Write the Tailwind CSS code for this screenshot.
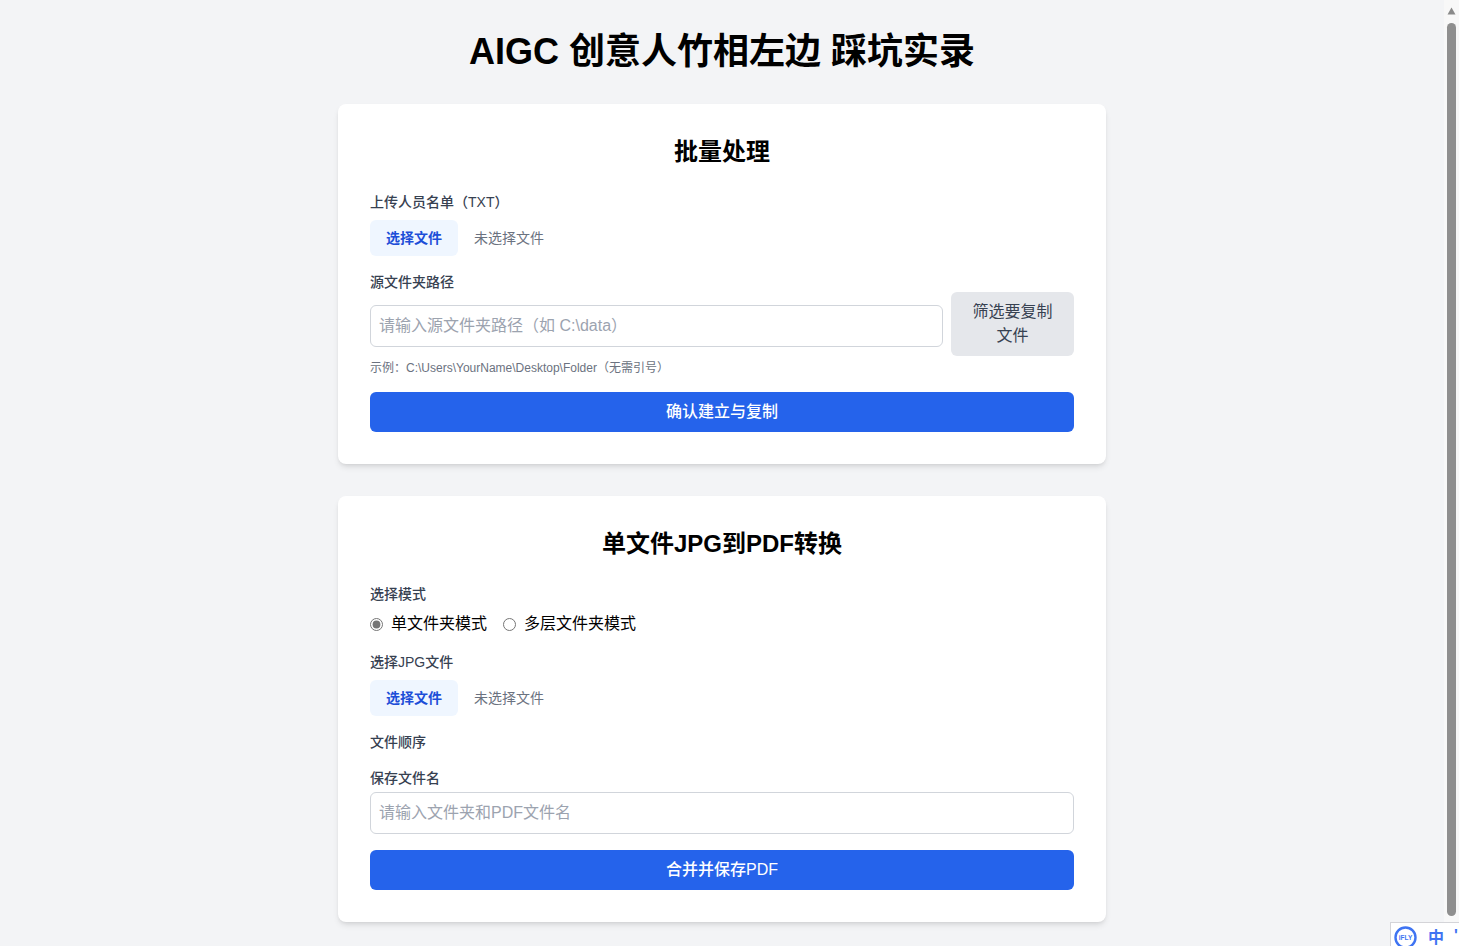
<!DOCTYPE html>
<html lang="zh-CN">
<head>
<meta charset="utf-8">
<title>AIGC</title>
<script src="https://cdn.jsdelivr.net/npm/@tailwindcss/browser@4"></script>
</head>
<body class="m-0 bg-[#f3f4f6] font-['Liberation_Sans','Noto_Sans_CJK_SC',sans-serif]">
<div class="relative flex h-[946px] w-[1459px] overflow-hidden">
  <main class="w-[1444px] shrink-0 py-8">
    <h1 class="mb-8 text-center text-4xl font-bold text-black">AIGC 创意人竹相左边 踩坑实录</h1>

    <section class="mx-auto mb-8 w-[768px] rounded-lg bg-white p-8 shadow-md">
      <h2 class="mb-6 text-center text-2xl font-bold text-black">批量处理</h2>
      <div class="mb-4">
        <div class="mb-2 text-sm font-medium text-[#374151]">上传人员名单（TXT）</div>
        <div class="flex items-center text-sm">
          <button class="mr-4 rounded-md bg-[#eff6ff] px-4 py-2 font-semibold text-[#1d4ed8]">选择文件</button>
          <span class="text-[#6b7280]">未选择文件</span>
        </div>
      </div>
      <div class="mb-4">
        <div class="text-sm font-medium text-[#374151]">源文件夹路径</div>
        <div class="flex items-center gap-2">
          <input class="mt-1 h-[42px] min-w-0 flex-1 rounded-md border border-[#d1d5db] px-2 text-base placeholder:text-[#9ca3af]" placeholder="请输入源文件夹路径（如 C:\data）">
          <button class="w-[123px] shrink-0 rounded-md bg-[#e5e7eb] px-4 py-2 text-base text-[#374151]">筛选要复制文件</button>
        </div>
        <p class="mt-1 text-xs text-[#6b7280]">示例：C:\Users\YourName\Desktop\Folder（无需引号）</p>
      </div>
      <button class="block h-10 w-full rounded-md bg-[#2563eb] text-base font-medium text-white">确认建立与复制</button>
    </section>

    <section class="mx-auto w-[768px] rounded-lg bg-white p-8 shadow-md">
      <h2 class="mb-6 text-center text-2xl font-bold text-black">单文件JPG到PDF转换</h2>
      <div class="mb-4">
        <div class="mb-2 text-sm font-medium text-[#374151]">选择模式</div>
        <div class="flex h-6 items-center text-base text-black">
          <label class="mr-4 flex items-center"><input type="radio" name="mode" checked class="mr-2 accent-[#757575]">单文件夹模式</label>
          <label class="flex items-center"><input type="radio" name="mode" class="mr-2">多层文件夹模式</label>
        </div>
      </div>
      <div class="mb-4">
        <div class="mb-2 text-sm font-medium text-[#374151]">选择JPG文件</div>
        <div class="flex items-center text-sm">
          <button class="mr-4 rounded-md bg-[#eff6ff] px-4 py-2 font-semibold text-[#1d4ed8]">选择文件</button>
          <span class="text-[#6b7280]">未选择文件</span>
        </div>
      </div>
      <div class="mb-4 text-sm font-medium text-[#374151]">文件顺序</div>
      <div class="mb-4">
        <div class="mb-1 text-sm font-medium text-[#374151]">保存文件名</div>
        <input class="block h-[42px] w-full rounded-md border border-[#d1d5db] px-2 text-base placeholder:text-[#9ca3af]" placeholder="请输入文件夹和PDF文件名">
      </div>
      <button class="block h-10 w-full rounded-md bg-[#2563eb] text-base font-medium text-white">合并并保存PDF</button>
    </section>
  </main>

  <div class="flex w-[15px] shrink-0 flex-col items-center bg-[#f8f8f8]">
    <svg class="mt-[7px]" width="9" height="8" viewBox="0 0 9 8"><path d="M4.5 0.5 L8.5 7.5 H0.5 Z" fill="#8a8a8a"/></svg>
    <div class="mt-[8px] h-[893px] w-[9px] rounded-full bg-[#8f8f8f]"></div>
  </div>

  <div class="absolute left-[1390px] top-[922px] flex h-[24px] w-[69px] items-start overflow-hidden border-l border-t border-[#d4d4d8] bg-white pl-[3px] pt-[3px]">
    <svg width="23" height="23" viewBox="0 0 23 23" class="shrink-0"><circle cx="11.5" cy="11.5" r="10" fill="none" stroke="#3f74f2" stroke-width="2.4"/><text x="11.5" y="14" text-anchor="middle" font-size="6.5" font-weight="700" fill="#3f74f2" font-family="Liberation Sans">iFLY</text></svg>
    <span class="ml-[11px] shrink-0 text-base font-bold leading-[24px] text-[#3f74f2]">中</span>
    <span class="ml-[10px] shrink-0 text-base font-bold leading-[20px] text-[#3f74f2]">'</span>
  </div>
</div>
</body>
</html>
